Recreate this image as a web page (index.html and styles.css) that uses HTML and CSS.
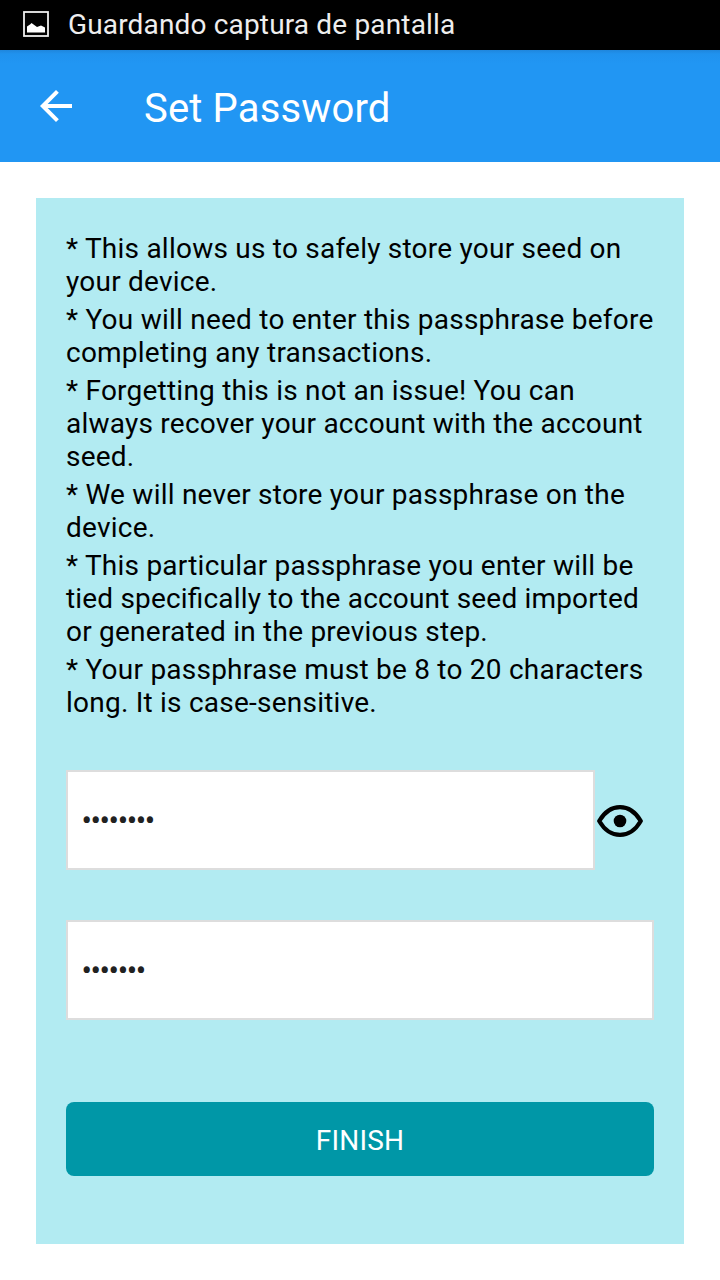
FILE: index.html
```html
<!DOCTYPE html>
<html lang="en">
<head>
<meta charset="utf-8">
<title>Set Password</title>
<link rel="stylesheet" href="styles.css">
</head>
<body>
<div class="status">
  <svg class="status-icon" width="26" height="26" viewBox="0 0 26 26"><rect x="1" y="1" width="24" height="24" fill="none" stroke="#eee" stroke-width="1.8"/><path d="M4 21.5v-6l3-2 1.500-1.500L14 16l4-1.500 4 2v5z" fill="#fff"/></svg>
  <span>Guardando captura de pantalla</span>
</div>
<header class="appbar">
  <svg class="back" width="32" height="32" viewBox="4 4 16 16"><path fill="#fff" d="M20 11H7.83l5.59-5.59L12 4l-8 8 8 8 1.410-1.410L7.830 13H20v-2z"/></svg>
  <h1 class="title">Set Password</h1>
</header>
<main class="card">
  <div class="notes">
    <p>* This allows us to safely store your seed on<br>your device.</p>
    <p>* You will need to enter this passphrase before<br>completing any transactions.</p>
    <p>* Forgetting this is not an issue! You can<br>always recover your account with the account<br>seed.</p>
    <p>* We will never store your passphrase on the<br>device.</p>
    <p>* This particular passphrase you enter will be<br><span class="snug">tied specifically to the account seed imported</span><br>or generated in the previous step.</p>
    <p>* Your passphrase must be 8 to 20 characters<br>long. It is case-sensitive.</p>
  </div>
  <div class="row">
    <div class="field">••••••••</div>
    <svg class="eye" width="46" height="32" viewBox="0 0 46 32"><path d="M2.200 16C13-2.500 33-2.500 43.800 16C33 34.500 13 34.500 2.200 16z" fill="none" stroke="#000" stroke-width="4.2" stroke-linejoin="round"/><circle cx="23" cy="16" r="6.300"/></svg>
  </div>
  <div class="field second">•••••••</div>
  <button class="finish">FINISH</button>
</main>
</body>
</html>
```
FILE: styles.css
```css
* { box-sizing: border-box; }
body { margin: 0; height: 1280px; background: #fff; font-family: Roboto, sans-serif; color: #000; }
.status { height: 50px; padding: 0 0 1px 23px; background: #000; color: #eee; display: flex; align-items: center; gap: 19px; font-size: 28px; line-height: 48px; letter-spacing: 0.16px; white-space: nowrap; }
.status-icon { margin-bottom: 2px; }
.appbar { height: 112px; background: linear-gradient(#1f86dc, #2092ee 4px, #2196f3 14px); color: #fff; display: flex; align-items: center; padding-left: 40px; gap: 72px; }
.title { margin: 0; padding-top: 4px; font-size: 40px; font-weight: 400; letter-spacing: 0.15px; white-space: nowrap; }
.card { margin: 36px 36px 0; height: 1046px; padding: 34px 30px 0; background: #b2ebf2; }
.notes { font-size: 28px; line-height: 33px; letter-spacing: 0.23px; font-feature-settings: "liga" 1; white-space: nowrap; }
.notes p { margin: 0 0 5px; }
.snug { letter-spacing: 0.18px; }
.row { margin-top: 51px; display: flex; align-items: center; gap: 2px; }
.field { height: 100px; border: 2px solid #ddd; background: #fff; flex: 1; padding: 0 13.5px; display: flex; align-items: center; font-size: 31px; letter-spacing: -1.42px; color: #212121; }
.row .field { flex: 0 0 529px; }
.eye { margin-top: 2px; }
.second { margin-top: 50px; }
.finish { display: block; width: 100%; height: 74px; margin-top: 82px; padding: 2px 0 0; border: 0; border-radius: 8px; background: #0097a7; color: #fff; font: 400 28px Roboto, sans-serif; letter-spacing: 0.2px; }
```
